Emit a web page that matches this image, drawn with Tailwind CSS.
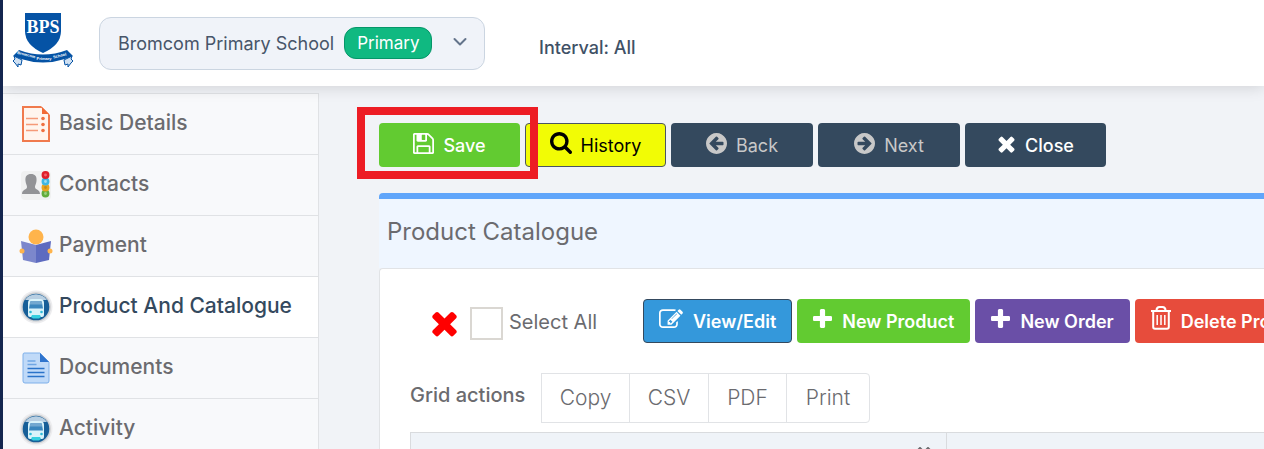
<!DOCTYPE html>
<html lang="en">
<head>
    <meta charset="UTF-8">
    <meta name="viewport" content="width=device-width, initial-scale=1.0">
    <title>Product Catalogue</title>
    <script src="https://cdn.jsdelivr.net/npm/@tailwindcss/browser@4"></script>
</head>
<body class="flex flex-col h-screen overflow-hidden bg-[#f1f3f7] border-l-3 border-[#14264f] font-['Inter','Liberation_Sans',sans-serif] text-[#6b6b6f]">

    <!-- Shared icons -->
    <svg class="hidden">
        <symbol id="i-save" viewBox="128 128 1536 1536"><path d="M512 1536h768v-384h-768v384zm896 0h128v-896q0-14-10-38.5t-20-34.5l-281-281q-10-10-34-20t-39-10v416q0 40-28 68t-68 28h-576q-40 0-68-28t-28-68v-416h-128v1280h128v-416q0-40 28-68t68-28h832q40 0 68 28t28 68v416zm-384-928v-320q0-13-9.5-22.5t-22.5-9.5h-192q-13 0-22.5 9.5t-9.5 22.5v320q0 13 9.5 22.5t22.5 9.5h192q13 0 22.5-9.5t9.5-22.5zm640 32v928q0 40-28 68t-68 28h-1344q-40 0-68-28t-28-68v-1344q0-40 28-68t68-28h928q40 0 88 20t76 48l280 280q28 28 48 76t20 88z"/></symbol>
        <symbol id="i-search" viewBox="64 128 1664 1664"><path d="M1216 832q0-185-131.500-316.500t-316.500-131.500-316.500 131.500-131.500 316.500 131.500 316.500 316.500 131.500 316.500-131.500 131.500-316.500zm512 832q0 52-38 90t-90 38q-54 0-90-38l-343-342q-179 124-399 124-143 0-273.500-55.500t-225-150-150-225-55.500-273.500 55.500-273.500 150-225 225-150 273.500-55.500 273.500 55.500 225 150 150 225 55.500 273.500q0 220-124 399l343 343q37 37 37 90z"/></symbol>
        <symbol id="i-left" viewBox="128 128 1536 1536"><path d="M1408 960v-128q0-26-19-45t-45-19h-502l189-189q19-19 19-45t-19-45l-91-91q-18-18-45-18t-45 18l-362 362-91 91q-18 18-18 45t18 45l91 91 362 362q18 18 45 18t45-18l91-91q18-18 18-45t-18-45l-189-189h502q26 0 45-19t19-45zm256-64q0 209-103 385.500t-279.500 279.500-385.500 103-385.500-103-279.500-279.500-103-385.500 103-385.500 279.500-279.500 385.500-103 385.500 103 279.500 279.500 103 385.500z"/></symbol>
        <symbol id="i-times" viewBox="192 320 1408 1408"><path d="M1490 1322q0 40-28 68l-136 136q-28 28-68 28t-68-28l-294-294-294 294q-28 28-68 28t-68-28l-136-136q-28-28-28-68t28-68l294-294-294-294q-28-28-28-68t28-68l136-136q28-28 68-28t68 28l294 294 294-294q28-28 68-28t68 28l136 136q28 28 28 68t-28 68l-294 294 294 294q28 28 28 68z"/></symbol>
        <symbol id="i-plus" viewBox="192 128 1408 1408"><path d="M1600 736v192q0 40-28 68t-68 28h-416v416q0 40-28 68t-68 28h-192q-40 0-68-28t-28-68v-416h-416q-40 0-68-28t-28-68v-192q0-40 28-68t68-28h416v-416q0-40 28-68t68-28h192q40 0 68 28t28 68v416h416q40 0 68 28t28 68z"/></symbol>
        <symbol id="i-edit" viewBox="0 128 1792 1536"><path d="M888 1184l116-116-152-152-116 116v56h96v96h56zm440-720q-16-16-33 1l-350 350q-17 17-1 33t33-1l350-350q17-17 1-33zm80 594v190q0 119-84.500 203.500t-203.500 84.500h-832q-119 0-203.500-84.500t-84.500-203.500v-832q0-119 84.500-203.500t203.500-84.500h832q63 0 117 25 15 7 18 23 3 17-9 29l-49 49q-14 14-32 8-23-6-45-6h-832q-66 0-113 47t-47 113v832q0 66 47 113t113 47h832q66 0 113-47t47-113v-126q0-13 9-22l64-64q15-15 35-7t20 29zm-96-738l288 288-672 672h-288v-288zm444 132l-92 92-288-288 92-92q28-28 68-28t68 28l152 152q28 28 28 68t-28 68z"/></symbol>
        <symbol id="i-trash" viewBox="0 0 20 24"><path d="M0 5h20M5.500 4.500q0-3.500 3-3.500h3q3 0 3 3.500M2.200 5v16q0 1.800 1.800 1.800h12q1.800 0 1.800-1.800V5" fill="none" stroke="currentColor" stroke-width="2"/><path d="M6.200 9v10M10 9v10M13.800 9v10" fill="none" stroke="currentColor" stroke-width="1.500"/></symbol>
        <symbol id="i-bus" viewBox="0 0 34 34">
            <circle cx="17" cy="17" r="16.500" fill="#ececee"/>
            <circle cx="17" cy="17" r="14.800" fill="#cfd1d4"/>
            <circle cx="17" cy="17" r="13.300" fill="#175f98"/>
            <path d="M6 10a13.300 13.300 0 0 1 22 0z" fill="#b8cfe2"/>
            <path d="M9 13q0-4 4-4h8q4 0 4 4v12q0 2-2 2H11q-2 0-2-2z" fill="#d9f3fa"/>
            <path d="M11 12.500q0-1.500 1.500-1.500h9q1.500 0 1.500 1.500l1 6H10z" fill="#3a86bd"/>
            <path d="M11 12.500q0-1.500 1.500-1.500h9q1.500 0 1.500 1.500v2H11z" fill="#72a8d0"/>
            <path d="M12 27l1-2h8l1 2-2 1.500h-6z" fill="#35cfe0"/>
            <circle cx="11.500" cy="22" r="1.300" fill="#2dbbd8"/><circle cx="22.500" cy="22" r="1.300" fill="#2dbbd8"/>
        </symbol>
    </svg>

    <!-- Header -->
    <header class="relative z-10 flex shrink-0 items-center h-[86px] bg-white shadow-[0_2px_14px_rgba(0,0,0,0.13)]">
        <svg class="ml-2 mb-1 w-[64px] h-[56px] shrink-0" viewBox="0 0 64 56" role="img" aria-label="Bromcom Primary School">
            <path d="M14 0h36v18q0 14-18 22Q14 32 14 18z" fill="#0553a5"/>
            <text x="32" y="20" text-anchor="middle" fill="#fff" class="font-['Liberation_Serif',serif] font-bold text-[18px]">BPS</text>
            <path d="M3 43l8 4-1 5-3-1 0 3-3-4-2-2 2-2zM61 43l-8 4 1 5 3-1 0 3 3-4 2-2-2-2z" fill="#cfe0f2" stroke="#0553a5"/>
            <path d="M2 43L8 37Q32 46 56 37L62 43 54 46Q32 53 10 46z" fill="#0553a5"/>
            <g fill="#fff" text-anchor="middle" class="font-['Liberation_Sans',sans-serif] font-bold text-[4px]">
                <text x="15" y="43" transform="rotate(14 15 43)">Bromcom</text>
                <text x="33" y="47">Primary</text>
                <text x="49" y="44" transform="rotate(-14 49 44)">School</text>
            </g>
        </svg>
        <button class="ml-6 flex h-[53px] w-[386px] shrink-0 items-center rounded-xl border border-[#cbd5e1] bg-[#f0f3f9] pl-[18px] pr-4 text-[18px] text-[#475569]">
            <span class="whitespace-nowrap">Bromcom Primary School</span>
            <span class="ml-[10px] rounded-xl border border-[#059669] bg-[#10b981] px-3 h-8 leading-[30px] text-[17px] text-white">Primary</span>
            <svg class="ml-auto w-4 h-4" viewBox="0 0 16 16" fill="none" stroke="#64748b" stroke-width="2" stroke-linecap="round" stroke-linejoin="round"><path d="M2.500 4L8 9.500 13.500 4"/></svg>
        </button>
        <p class="ml-[54px] mt-2 text-[18px] font-medium text-[#3f5166]">Interval: All</p>
    </header>

    <div class="flex flex-1 min-h-0">
        <!-- Section menu -->
        <nav class="mt-[7px] w-[316px] shrink-0 overflow-hidden border-t border-r border-[#e0e2e5] bg-[#f8f9fb] text-[21px] font-medium">
            <a href="#" class="flex h-[61px] items-center gap-[6px] border-b border-[#e0e2e5] pl-4">
                <svg class="w-[34px] h-[38px]" viewBox="0 0 34 38"><path d="M4 2h19l7 7v27H4z" fill="#fff5ee" stroke="#f07a4d" stroke-width="2"/><path d="M22 1h9v9z" fill="#f8f9fb"/><path d="M23 2v7h7z" fill="#f26a35"/><path d="M7 13.500h12M7 19.500h12M7 25.500h12" stroke="#f59a78" stroke-width="1.500"/><circle cx="24" cy="13.500" r="1.800" fill="#f0703f"/><circle cx="24" cy="19.500" r="1.800" fill="#f0703f"/><circle cx="24" cy="25.500" r="1.800" fill="#f0703f"/></svg>
                <span class="-mt-0.5">Basic Details</span>
            </a>
            <a href="#" class="flex h-[61px] items-center gap-[6px] border-b border-[#e0e2e5] pl-4">
                <svg class="w-[34px] h-[34px]" viewBox="0 0 34 34"><rect x="2" y="3" width="30" height="29" rx="4" fill="#f0f1f1"/><path d="M12 6c4 0 6 2 5.500 7-.3 3-1.500 4-1.500 6 0 3 5 2 5 7H3c0-5 5-4 5-7 0-2-1.200-3-1.500-6C6 8 8 6 12 6z" fill="#929396"/><g stroke-width="2.500"><circle cx="26.500" cy="25.500" r="2.700" stroke="#62ad3c" fill="#9bd07d"/><circle cx="26.500" cy="19.500" r="2.700" stroke="#e9a51d" fill="#c88b1a"/><circle cx="26.500" cy="13.500" r="2.700" stroke="#3db7e4" fill="#9bdcf2"/><circle cx="26.500" cy="7" r="2.700" stroke="#e01f2b" fill="#ef6670"/></g></svg>
                <span class="-mt-0.5">Contacts</span>
            </a>
            <a href="#" class="flex h-[61px] items-center gap-[6px] border-b border-[#e0e2e5] pl-4">
                <svg class="w-[34px] h-[36px]" viewBox="0 0 34 36"><circle cx="17" cy="9" r="7.500" fill="#ffb44c"/><path d="M2 13l15 4v18L4 32z" fill="#7c87cc"/><path d="M32 13l-15 4v18l13-3z" fill="#5d6bc0"/><circle cx="3" cy="23" r="2.500" fill="#ffb44c"/><circle cx="31" cy="23" r="2.500" fill="#ffb44c"/></svg>
                <span class="-mt-0.5">Payment</span>
            </a>
            <a href="#" aria-current="page" class="flex h-[61px] items-center gap-[6px] border-b border-[#e0e2e5] bg-white pl-4 text-[#34495e]">
                <svg class="w-[34px] h-[34px]"><use href="#i-bus"/></svg>
                <span class="-mt-0.5">Product And Catalogue</span>
            </a>
            <a href="#" class="flex h-[61px] items-center gap-[6px] border-b border-[#e0e2e5] pl-4">
                <svg class="w-[34px] h-[32px]" viewBox="0 0 34 32"><path d="M5 1h16l9 9v19q0 2-2 2H6q-2 0-2-2V3q0-2 1-2z" fill="#c0daf8" stroke="#7eb0ea"/><path d="M21 1l9 9h-9z" fill="#2f74cd"/><path d="M8.500 9h8M8.500 12.500h9" stroke="#6fa6e4" stroke-width="1.500"/><path d="M8.500 16.500h17M8.500 20.500h17M8.500 24.500h17" stroke="#2a73c9" stroke-width="1.500"/></svg>
                <span class="-mt-0.5">Documents</span>
            </a>
            <a href="#" class="flex h-[61px] items-center gap-[6px] border-b border-[#e0e2e5] pl-4">
                <svg class="w-[34px] h-[34px]"><use href="#i-bus"/></svg>
                <span class="-mt-0.5">Activity</span>
            </a>
        </nav>

        <!-- Content -->
        <main class="flex flex-1 min-w-0 flex-col overflow-hidden pt-[37px] pl-[60px]">
            <div class="flex gap-[5px] text-[18px] font-medium text-white">
                <div class="relative">
                    <button class="flex h-11 w-[141px] items-center justify-center gap-[9px] rounded bg-[#62cb31]"><svg class="w-[21px] h-[21px] -mt-1" fill="currentColor"><use href="#i-save"/></svg>Save</button>
                    <span class="pointer-events-none absolute z-10 -top-4 -bottom-3 -left-[22px] w-[181px] border-8 border-[#ed1c24]"></span>
                </div>
                <button class="flex h-11 w-[141px] items-center justify-center gap-[9px] rounded border border-[#4b5563] bg-[#f2fc05] font-normal text-black"><svg class="w-[22px] h-[22px] -mt-1" fill="currentColor"><use href="#i-search"/></svg>History</button>
                <button class="flex h-11 w-[142px] items-center justify-center gap-[9px] rounded bg-[#34495e] font-normal text-[#c8c8c8]"><svg class="w-[21px] h-[21px] -mt-1" fill="currentColor"><use href="#i-left"/></svg>Back</button>
                <button class="flex h-11 w-[142px] items-center justify-center gap-[9px] rounded bg-[#34495e] font-normal text-[#c8c8c8]"><svg class="w-[21px] h-[21px] -mt-1 -scale-x-100" fill="currentColor"><use href="#i-left"/></svg>Next</button>
                <button class="flex h-11 w-[141px] items-center justify-center gap-[9px] rounded bg-[#34495e]"><svg class="w-[19px] h-[19px]" fill="currentColor"><use href="#i-times"/></svg>Close</button>
            </div>

            <section class="mt-[26px] flex flex-1 flex-col">
                <h1 class="h-[75px] rounded-tl border-t-6 border-[#60a5fa] bg-[#eff6ff] pl-2 text-[24px] leading-[65px]">Product Catalogue</h1>
                <div class="flex-1 rounded-tl border-t border-l border-[#e1e3e6] bg-white pl-[30px] pt-[30px]">
                    <div class="flex h-11 items-center whitespace-nowrap">
                        <button class="ml-5 mt-2 shrink-0" aria-label="Clear"><svg class="w-[29px] h-[29px]" fill="#f00"><use href="#i-times"/></svg></button>
                        <input id="selectAll" type="checkbox" class="ml-[11px] mt-1 size-[33px] shrink-0 appearance-none border-2 border-[#dad7d2] bg-white">
                        <label for="selectAll" class="ml-[6px] mt-0.5 w-[134px] shrink-0 text-[20px]">Select All</label>
                        <div class="flex shrink-0 gap-[5px] text-[18px] font-semibold text-white">
                            <button class="flex h-11 shrink-0 items-center gap-[10px] rounded border border-[#34495e] bg-[#3498db] px-[15px]"><svg class="w-6 h-[21px] -mt-1" fill="currentColor"><use href="#i-edit"/></svg>View/Edit</button>
                            <button class="flex h-11 shrink-0 items-center gap-[10px] rounded bg-[#62cb31] px-4"><svg class="w-[19px] h-[19px] -mt-1.5" fill="currentColor"><use href="#i-plus"/></svg>New Product</button>
                            <button class="flex h-11 shrink-0 items-center gap-[10px] rounded bg-[#6a4fa7] px-4"><svg class="w-[19px] h-[19px] -mt-1.5" fill="currentColor"><use href="#i-plus"/></svg>New Order</button>
                            <button class="flex h-11 shrink-0 items-center gap-[10px] rounded bg-[#e74c3c] px-4"><svg class="w-5 h-6 -mt-1.5"><use href="#i-trash"/></svg>Delete Product</button>
                        </div>
                    </div>

                    <div class="mt-[30px] flex h-[50px] items-center">
                        <span class="-mt-1.5 w-[131px] text-[20px] font-medium">Grid actions</span>
                        <div class="flex h-full text-[21px] font-light">
                            <button class="w-[89px] border border-[#e1e3e6]">Copy</button>
                            <button class="-ml-px w-[80px] border border-[#e1e3e6]">CSV</button>
                            <button class="-ml-px w-[79px] border border-[#e1e3e6]">PDF</button>
                            <button class="-ml-px w-[84px] rounded-r border border-[#e1e3e6]">Print</button>
                        </div>
                    </div>

                    <table class="mt-[9px] w-full border-collapse">
                        <thead>
                            <tr class="h-[60px] bg-[#eff3f8]">
                                <th class="w-[536px] border border-r border-[#d9dbde] pr-[14px] pt-[14px] align-top"><svg class="ml-auto w-4 h-3" viewBox="0 0 16 12" fill="none" stroke="#6b6b6f" stroke-width="2"><path d="M1 4l3-3 3 3M4 1v11M9 4l3-3 3 3M12 1v11"/></svg></th>
                                <th class="border border-r-0 border-[#d9dbde]"></th>
                            </tr>
                        </thead>
                    </table>
                </div>
            </section>
        </main>
    </div>
</body>
</html>
